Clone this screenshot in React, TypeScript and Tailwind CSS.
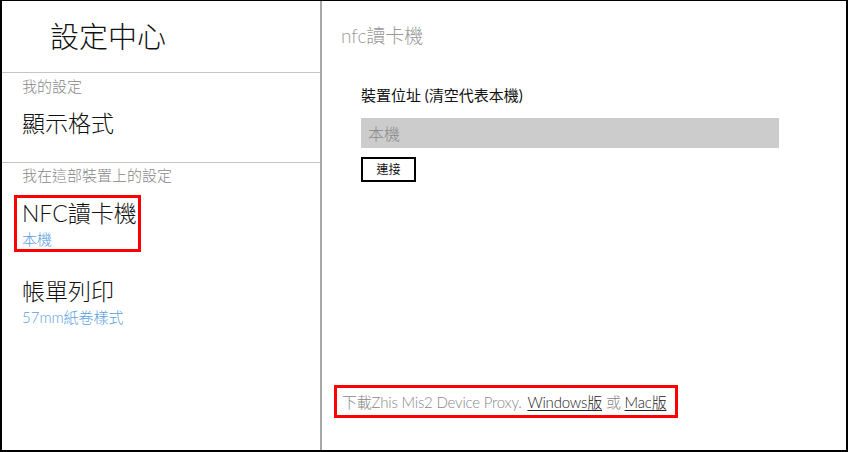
import React from 'react';

const font = { fontFamily: 'Lato, "Noto Sans CJK TC", sans-serif' };

const App: React.FC = () => {
  return (
    <div
      className="w-[848px] h-[452px] bg-white border-t border-l-2 border-r-2 border-b-2 border-black flex text-[#111] font-light"
      style={font}
    >
      {/* 左側選單 */}
      <aside className="w-[320px] shrink-0 border-r-2 border-[#a8a8a8] flex flex-col">
        <div className="h-[72px] flex items-center pl-[48px] border-b border-[#c4c4c4]">
          <h1 className="text-[29px] leading-[36px] font-light">設定中心</h1>
        </div>

        <div className="border-b border-[#c4c4c4] pl-[20px] pt-[3px] pb-[23px]">
          <p className="text-[15px] leading-[20px] text-[#888]">我的設定</p>
          <p className="mt-[11px] text-[23px] leading-[32px]">顯示格式</p>
        </div>

        <div className="pt-[2px]">
          <p className="pl-[20px] text-[15px] leading-[20px] text-[#888]">我在這部裝置上的設定</p>
          <div className="mt-[10px] ml-[12px] w-[127px] border-[3px] border-[#ff0000] pl-[5px]">
            <p className="text-[23px] leading-[31px] whitespace-nowrap">NFC讀卡機</p>
            <p className="text-[15px] leading-[20px] text-[#5a9fe0]">本機</p>
          </div>
          <div className="pl-[20px] mt-[23px]">
            <p className="text-[23px] leading-[32px]">帳單列印</p>
            <p className="text-[15px] leading-[20px] text-[#5a9fe0]">57mm紙卷樣式</p>
          </div>
        </div>
      </aside>

      {/* 右側內容 */}
      <main className="flex-1 flex flex-col">
        <h2 className="pl-[19px] pt-[21px] text-[19px] leading-[28px] text-[#999] font-light">nfc讀卡機</h2>

        <div className="ml-[39px] mt-[35px]">
          <label className="block text-[15px] leading-[20px] font-normal">裝置位址 (清空代表本機)</label>
          <input
            type="text"
            placeholder="本機"
            className="mt-[13px] block w-[418px] h-[30px] bg-[#cccccc] px-[7px] text-[16px] font-light placeholder:text-[#888] outline-none"
            style={font}
          />
          <button className="mt-[9px] w-[55px] h-[25px] border-2 border-black bg-white text-[12px] font-normal flex items-center justify-center">
            連接
          </button>
        </div>

        <div className="mt-auto mb-[32px] ml-[12px] w-[344px] h-[33px] border-[3px] border-[#ff0000] pl-[5px] flex items-center">
          <p className="text-[15px] leading-[20px] tracking-[-0.2px] text-[#888] whitespace-nowrap">
            下載Zhis Mis2 Device Proxy.{' '}
            <a className="ml-[2px] text-[#222] underline underline-offset-2">Windows版</a>{' '}
            或{' '}
            <a className="text-[#222] underline underline-offset-2">Mac版</a>
          </p>
        </div>
      </main>
    </div>
  );
};

export default App;
